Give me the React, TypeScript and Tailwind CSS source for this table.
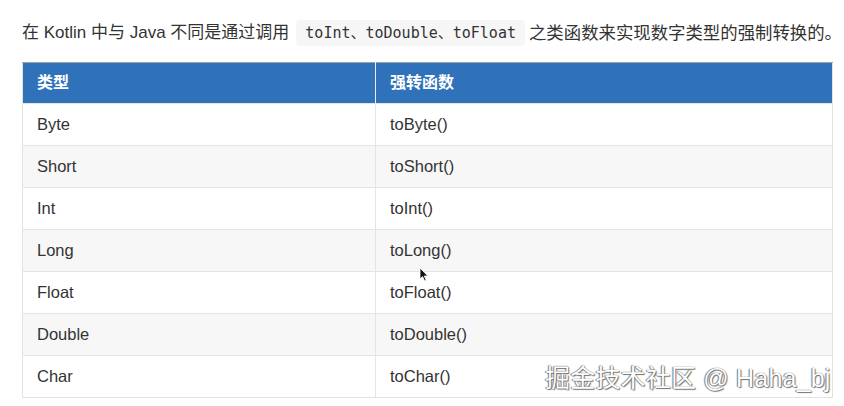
import React from 'react';

const rows = [
  ['Byte', 'toByte()'],
  ['Short', 'toShort()'],
  ['Int', 'toInt()'],
  ['Long', 'toLong()'],
  ['Float', 'toFloat()'],
  ['Double', 'toDouble()'],
  ['Char', 'toChar()'],
];

const Cursor = () => (
  <svg className="absolute left-[419px] top-[267px]" width="10" height="15" viewBox="0 0 10 15">
    <path d="M1 1 L1 12 L3.6 9.6 L5.6 14 L7.2 13.3 L5.3 9 L8.8 9 Z" fill="#111" stroke="#fff" strokeWidth="0.8" />
  </svg>
);

const App: React.FC = () => {
  return (
    <div className="relative w-[844px] h-[406px] bg-white overflow-hidden text-[#333] font-['Liberation_Sans','Noto_Sans_CJK_SC',sans-serif]">
      <div className="pl-[22px] pr-2 pt-[20px]">
        <p className="h-[26px] flex items-center text-[17px] leading-[26px] whitespace-nowrap">
          在 Kotlin 中与 Java 不同是通过调用
          <code className="ml-[7px] mr-[4px] px-[9px] bg-[#f6f6f6] rounded-sm text-[15px] leading-[26px] text-[#333] font-['DejaVu_Sans_Mono','Noto_Sans_CJK_SC',monospace]">
            toInt、toDouble、toFloat
          </code>
          <span className="text-[17.4px]">之类函数来实现数字类型的强制转换的。</span>
        </p>
      </div>
      <div className="pl-[22px] pt-[16px]">
        <table className="w-[811px] border-collapse border border-[#e2e2e2] text-[16.5px]">
          <thead>
            <tr className="h-[41px] bg-[#2f72b9] text-white border-t border-[#9aa3ad]">
              <th className="w-[353px] pl-[14px] text-left text-[16px] font-bold border-r border-[#e8eef5]">类型</th>
              <th className="pl-[14px] text-left text-[16px] font-bold">强转函数</th>
            </tr>
          </thead>
          <tbody>
            {rows.map((r, i) => (
              <tr key={r[0]} className={`h-[42px] border-t border-[#e4e4e4] ${i % 2 === 1 ? 'bg-[#f7f7f8]' : 'bg-white'}`}>
                <td className="pl-[14px] border-r border-[#e4e4e4]">{r[0]}</td>
                <td className="pl-[14px]">{r[1]}</td>
              </tr>
            ))}
          </tbody>
        </table>
      </div>
      <Cursor />
      <div className="absolute left-[545px] top-[362px] text-[25px] tracking-[0.2px] leading-[32px] text-white whitespace-nowrap [text-shadow:0_0_1px_#555,1px_1px_1px_#777,-1px_0_1px_#888]">
        掘金技术社区 @ Haha_bj
      </div>
    </div>
  );
};

export default App;
